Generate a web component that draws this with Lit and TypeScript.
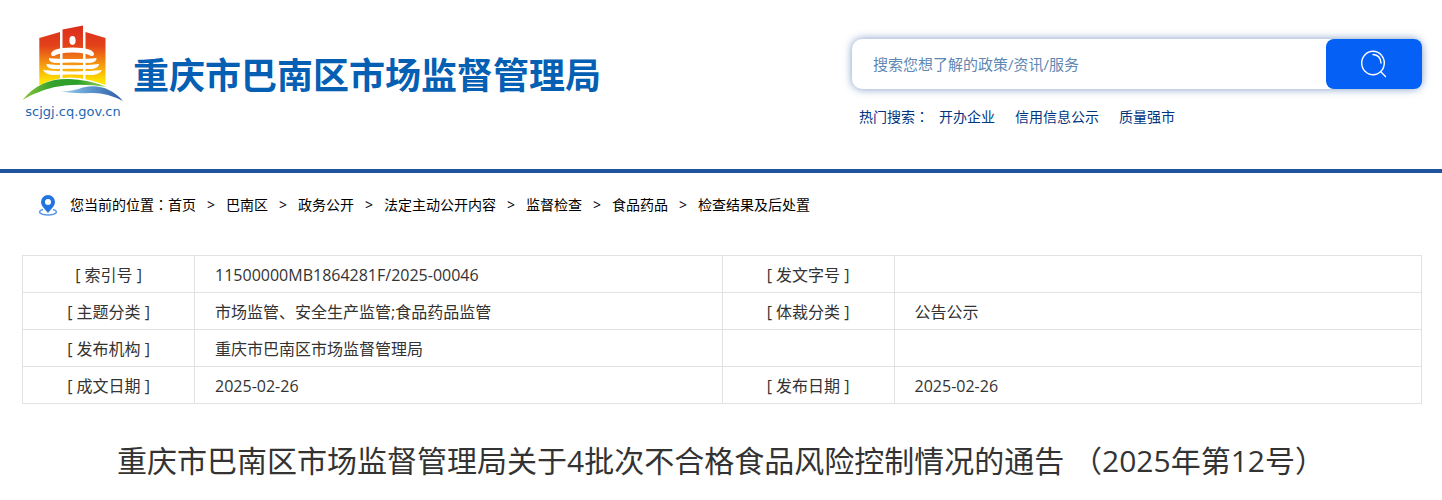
import { LitElement, html, css, svg } from "lit";
import { customElement } from "lit/decorators.js";

const crumbs = ["首页", "巴南区", "政务公开", "法定主动公开内容", "监督检查", "食品药品", "检查结果及后处置"];
const hotWords = ["开办企业", "信用信息公示", "质量强市"];
const records = [
  ["[ 索引号 ]", "11500000MB1864281F/2025-00046", "[ 发文字号 ]", ""],
  ["[ 主题分类 ]", "市场监管、安全生产监管;食品药品监管", "[ 体裁分类 ]", "公告公示"],
  ["[ 发布机构 ]", "重庆市巴南区市场监督管理局", "", ""],
  ["[ 成文日期 ]", "2025-02-26", "[ 发布日期 ]", "2025-02-26"],
];

const emblem = svg`
  <defs>
    <linearGradient id="tower" gradientUnits="userSpaceOnUse" x1="0" y1="2" x2="0" y2="56">
      <stop offset="0" stop-color="#dc2f1e" />
      <stop offset="0.35" stop-color="#e4421a" />
      <stop offset="0.7" stop-color="#f59a10" />
      <stop offset="1" stop-color="#ffe200" />
    </linearGradient>
    <linearGradient id="hill" x1="0" y1="0" x2="1" y2="0">
      <stop offset="0" stop-color="#8cc63a" />
      <stop offset="0.35" stop-color="#35a12b" />
      <stop offset="0.65" stop-color="#2b9f2b" />
      <stop offset="1" stop-color="#a5d65a" />
    </linearGradient>
    <linearGradient id="river" x1="0" y1="0" x2="1" y2="0">
      <stop offset="0" stop-color="#9dd0ea" />
      <stop offset="0.5" stop-color="#5a93cc" />
      <stop offset="1" stop-color="#2d5ca6" />
    </linearGradient>
  </defs>
  <g fill="url(#tower)">
    <path d="M17.300 13 38 7V55L17.300 60z" />
    <path d="M40.500 4.500 61 0.500V56H40.500z" />
    <path d="M63.500 7 83.500 13V60L63.500 55z" />
  </g>
  <ellipse cx="50.500" cy="15.500" rx="3.100" ry="4.400" fill="#fff" />
  <g fill="#fff">
    <path d="M29 29Q30 22.500 50.500 22.500T72 29Q72 31 69 31Q64 27.500 50.500 27.500T32 31Q29 31 29 29z" />
    <path d="M27 33Q34 34 50.500 34T74.500 33Q75 37 68 38Q60 37.500 50.500 37.500T33 38Q26 37 27 33z" />
    <path d="M24.500 39Q33 40.200 50.500 40.200T77 39Q77 43 70 44Q62 43.700 50.500 43.700T31 44Q24 43 24.500 39z" />
    <path d="M21 45Q33 46.400 50.500 46.400T80 45Q78 49 71 50Q62 49.500 50.500 49.500T30 50Q23 49 21 45z" />
    <path d="M13 64Q27 53 48 52.500Q68 53 88 62V66H13z" />
  </g>
  <path fill="url(#hill)" d="M0.500 75Q18 53 47 54Q66 54.500 85 62Q62 58.500 43 60.500Q20 63 0.500 75z" />
  <path fill="url(#river)" d="M39 66.500Q50 66.500 61 62.500Q84 57 101 76Q84 67 68 68Q54 69 39 66.500z" />
`;

@customElement("app-root")
export class AppRoot extends LitElement {
  static styles = css`
    :host {
      display: block;
      background: #fff;
      color: #333;
      font-family: "Open Sans", "Noto Sans CJK SC", sans-serif;
    }
    * { box-sizing: border-box; }
    a { color: inherit; text-decoration: none; }
    .punct { font-family: "Noto Sans CJK TC", sans-serif; line-height: 1; }
    .header {
      display: flex;
      justify-content: space-between;
      align-items: flex-start;
      padding: 25px 20px 41px 22px;
      border-bottom: 4px solid #1f539c;
    }
    .brand { display: flex; gap: 9px; color: #0560b4; }
    .mark { display: flex; flex-direction: column; width: 102px; }
    .emblem { width: 102px; height: 77px; }
    .domain { font: 13px/20px "DejaVu Sans", sans-serif; text-align: center; white-space: nowrap; color: #1c67b2; }
    .name { margin: 24px 0 0; font-size: 36px; line-height: 54px; font-weight: 700; white-space: nowrap; }
    .finder { width: 570px; padding-top: 14px; }
    .search {
      display: flex;
      height: 50px;
      border-radius: 10px;
      background: #fff;
      box-shadow: 0 0 8px #1f539c99;
    }
    .query {
      flex: 1;
      min-width: 0;
      padding: 0 21px;
      border: 0;
      outline: 0;
      border-radius: 10px;
      background: none;
      font: inherit;
      font-size: 15px;
      color: #333;
    }
    .query::placeholder { color: #6088b3; opacity: 1; }
    .go {
      display: grid;
      place-items: center;
      width: 96px;
      padding: 0;
      border: 0;
      border-radius: 8px;
      background: #0560f6;
    }
    .lens { width: 28px; height: 28px; }
    .hot { display: flex; margin-top: 17px; padding-left: 7px; font-size: 14px; line-height: 22px; color: #003580; }
    .hot-links { display: flex; gap: 20px; padding-left: 10px; }
    .crumbs { display: flex; align-items: center; padding: 20px 22px 0 38px; font-size: 14px; line-height: 24px; color: #000; }
    .pin { width: 20px; height: 22px; margin-right: 12px; }
    .sep { padding: 0 11px; }
    .info {
      width: calc(100% - 42px);
      margin: 38px 20px 0 22px;
      border-collapse: collapse;
      table-layout: fixed;
      font-size: 16px;
      line-height: 24px;
    }
    .info th, .info td { height: 37px; padding: 2px 20px 0; border: 1px solid #e2e2e2; text-align: left; font-weight: 400; }
    .info th { width: 12.3%; padding: 2px 0 0; text-align: center; }
    .title { margin: 35px 22px 0; text-align: center; font-size: 30px; line-height: 44px; font-weight: 400; }
  `;

  render() {
    return html`
      <header class="header">
        <div class="brand">
          <div class="mark">
            <svg class="emblem" viewBox="0 0 102 77" aria-hidden="true">${emblem}</svg>
            <span class="domain">scjgj.cq.gov.cn</span>
          </div>
          <p class="name">重庆市巴南区市场监督管理局</p>
        </div>
        <div class="finder">
          <form class="search" @submit=${(e: Event) => e.preventDefault()}>
            <input class="query" type="text" aria-label="搜索" placeholder="搜索您想了解的政策/资讯/服务" />
            <button class="go" aria-label="搜索">
              <svg class="lens" viewBox="0 0 28 28" fill="none" stroke="#fff" stroke-width="1.400" stroke-linecap="round">
                <ellipse cx="13" cy="13" rx="11.300" ry="11.800" />
                <path d="M13 4.500Q20.500 5 21 13M21 22 25.500 26.500" />
              </svg>
            </button>
          </form>
          <div class="hot">
            <span>热门搜索<span class="punct">：</span></span>
            <nav class="hot-links">${hotWords.map((w) => html`<a href="#">${w}</a>`)}</nav>
          </div>
        </div>
      </header>
      <nav class="crumbs">
        <svg class="pin" viewBox="0 0 20 22" aria-hidden="true">
          <path d="M5 15.500C-1 17 1 21 10 21S21 17 15 15.500" fill="none" stroke="#5c9aec" stroke-width="1.500" />
          <path fill="#2374e1" fill-rule="evenodd" d="M10 1a7 7 0 0 0-7 7c0 4 4 7 7 11 3-4 7-7 7-11a7 7 0 0 0-7-7zm0 4a3 3 0 1 1 0 6 3 3 0 0 1 0-6z" />
        </svg>
        <span>您当前的位置<span class="punct">：</span></span>
        ${crumbs.map((c, i) => html`${i ? html`<span class="sep">&gt;</span>` : ""}<a href="#">${c}</a>`)}
      </nav>
      <table class="info">
        <tbody>
          ${records.map((r) => html`<tr>
            <th scope="row">${r[0]}</th><td>${r[1]}</td>
            <th scope="row">${r[2]}</th><td>${r[3]}</td>
          </tr>`)}
        </tbody>
      </table>
      <h1 class="title">重庆市巴南区市场监督管理局关于4批次不合格食品风险控制情况的通告 <span class="punct">（</span>2025年第12号<span class="punct">）</span></h1>
    `;
  }
}
